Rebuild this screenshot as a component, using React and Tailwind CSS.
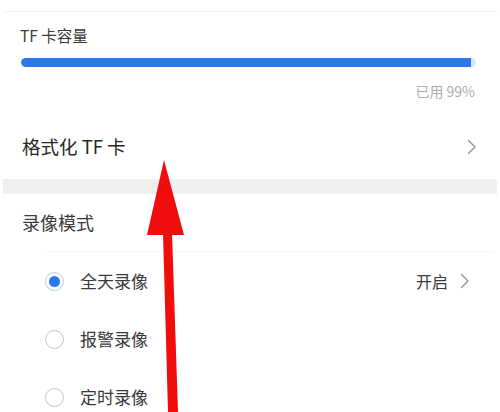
import React from "react";

const FONT = { fontFamily: '"Noto Sans CJK SC", "Noto Sans", sans-serif' };

const Chevron = ({ className }) => (
  <svg className={className} width="10" height="16" viewBox="0 0 10 16" fill="none">
    <path d="M1.5 1.5L8 8l-6.5 6.5" stroke="#8f8f8f" strokeWidth="1.3" strokeLinecap="round" strokeLinejoin="round" />
  </svg>
);

const Radio = ({ checked }) =>
  checked ? (
    <span className="flex h-[19px] w-[19px] items-center justify-center rounded-full border border-[#b9cdf0]">
      <span className="h-[11px] w-[11px] rounded-full bg-[#2b78ee]" />
    </span>
  ) : (
    <span className="h-[19px] w-[19px] rounded-full border border-[#c4c4c4]" />
  );

const modes = [
  { label: "全天录像", checked: true, status: "开启" },
  { label: "报警录像", checked: false },
  { label: "定时录像", checked: false },
];

export default function App() {
  return (
    <div className="relative h-[412px] w-[500px] overflow-hidden bg-white text-[#333]" style={FONT}>
      {/* top divider */}
      <div className="h-[11px]" />
      <div className="mx-[3px] h-px bg-[#f3f3f3]" />

      {/* TF card capacity */}
      <div className="px-[20px]">
        <div className="flex h-[46px] items-center pt-[2px] text-[15.5px] text-[#3a3a3a]">TF 卡容量</div>
        <div className="ml-px h-[9px] w-[455px] overflow-hidden rounded-full bg-[#d7e6fb]">
          <div className="h-full w-[99%] rounded-l-full bg-[#2b78ee]" />
        </div>
        <div className="flex h-[48px] items-center justify-end pr-[5px] text-[14px] text-[#ababab]">已用 99%</div>
      </div>

      {/* format */}
      <div className="flex h-[64px] items-center justify-between pl-[22px] pr-[23px]">
        <span className="text-[18.5px] text-[#262626]">格式化 TF 卡</span>
        <Chevron />
      </div>

      <div className="mx-[3px] h-[15px] bg-[#efefef]" />

      {/* record mode */}
      <div className="flex h-[57px] items-center pl-[22px] text-[18px] text-[#3a3a3a]">录像模式</div>
      <div className="ml-[45px] mr-[5px] h-px bg-[#f6f6f6]" />

      <div className="flex flex-col">
        {modes.map((m) => (
          <div key={m.label} className="flex h-[58px] items-center pl-[45px] pr-[30px]">
            <Radio checked={m.checked} />
            <span className="ml-[16px] text-[17px] text-[#3a3a3a]">{m.label}</span>
            {m.status && (
              <span className="ml-auto flex items-center gap-[12px] text-[16px] text-[#3a3a3a]">
                {m.status}
                <Chevron />
              </span>
            )}
          </div>
        ))}
      </div>

      {/* red annotation arrow */}
      <svg className="pointer-events-none absolute left-0 top-0" width="500" height="412" viewBox="0 0 500 412">
        <polygon points="163,233 172,233 178,412 168,412" fill="#f20d0d" />
        <polygon points="164,160 147,235 184,235" fill="#f20d0d" />
      </svg>
    </div>
  );
}
